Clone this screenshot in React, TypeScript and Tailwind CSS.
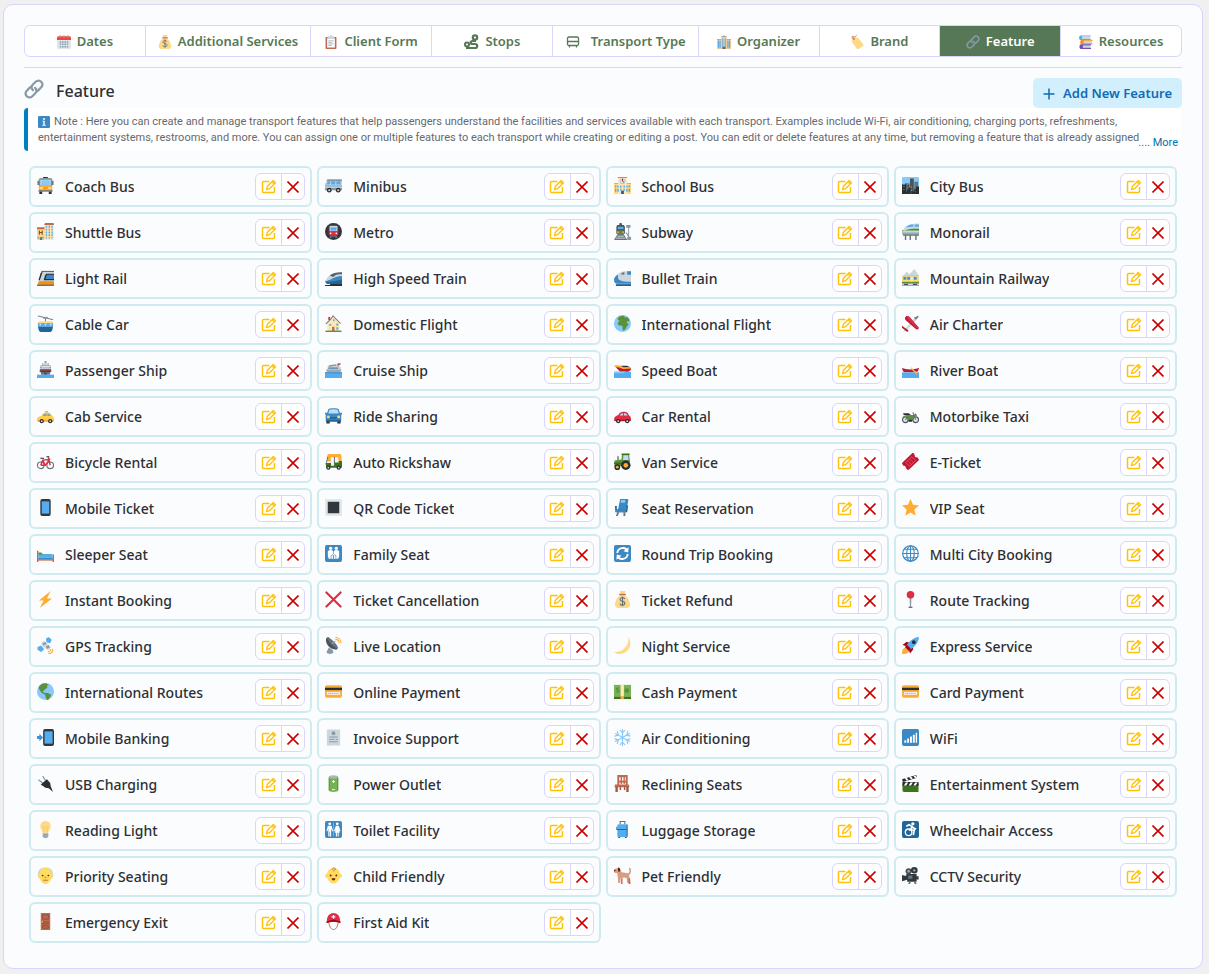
// src/pages/transport/FeatureSettings.tsx
import type { ReactNode } from "react";

const ICONS: Record<string, ReactNode> = {
  calendar: (
    <>
      <path fill="#E0E7EC" d="M36 32a4 4 0 0 1-4 4H4a4 4 0 0 1-4-4V9h36z" />
      <path fill="#F4433A" d="M0 13V7a4 4 0 0 1 4-4h28a4 4 0 0 1 4 4v6z" />
      <path stroke="#9AAAB4" strokeWidth="2.6" d="M8 0v8M18 0v8M28 0v8" />
      <path stroke="#8899A6" strokeWidth="4" strokeDasharray="4 2" d="M7 18h23M7 24h23M7 30h23" />
    </>
  ),
  moneybag: (
    <>
      <path fill="#FDD888" d="M31.9 21c-.5-5-5.4-9-9.4-12h-9c-4 3-9 7-9.400 12-.3 1-2.100 5-2.100 8 0 5 4 7 7 7h18c3 0 7-2 7-7 0-3-1.600-6-2.100-8zM12 0h12l-2 7h-8z" />
      <path fill="#BF6952" d="M11 6h14v3H11z" />
      <path fill="none" stroke="#67757F" strokeWidth="2.400" d="M23 17c-1-2-3-3-5-3-3 0-5 1.500-5 4s2 3.500 5 4 5 1.500 5 4-2 4-5 4-5-1-5.500-3M18 11.500v21" />
    </>
  ),
  clipboard: (
    <>
      <path fill="#C1694F" d="M32 34a2 2 0 0 1-2 2H6a2 2 0 0 1-2-2V7a2 2 0 0 1 2-2h24a2 2 0 0 1 2 2z" />
      <path fill="#fff" d="M8 9h20v23H8z" />
      <path fill="#CCD6DD" d="M25 3h-4a3 3 0 0 0-6 0h-4a2 2 0 0 0-2 2v5h18V5a2 2 0 0 0-2-2z" />
      <path stroke="#99AAB5" strokeWidth="2" d="M11 15h14M11 19h10M11 23h14M11 27h9" />
    </>
  ),
  hospital: (
    <>
      <path fill="#F3D2A2" d="M11 4h14v32H11z" />
      <path fill="#E6C79A" d="M0 12h12v24H0zM24 12h12v24H24z" />
      <path fill="#8899A6" d="M11 3h14v2H11zM0 10h11v2H0zM25 10h11v2H25zM17 0h2v4h-2z" />
      <path stroke="#55ACEE" strokeWidth="2.800" d="M4 15v18M8 15v18M28 15v18M32 15v18M15 9v22M21 9v22" />
      <path fill="#5C6B77" d="M14 30h8v6h-8z" />
    </>
  ),
  label: (
    <>
      <path fill="#FFD983" d="M5 7c1-2 3-3 5-2l11 3 13 16c1 1 1 3 0 4L22 36c-2 1-4 0-5-1L5 18z" />
      <circle cx="10" cy="10" r="3" fill="#D99E82" />
      <path fill="none" stroke="#C1694F" strokeWidth="2" d="M10 10C4 8 3 2 8 4c4 2 8 0 9-3" />
    </>
  ),
  link: (
    <g fill="none" stroke="#8899A6" strokeWidth="4" strokeLinecap="round">
      <path d="M16 20c-3-3-3-7 0-10l5-5c3-3 7-3 10 0s3 7 0 10l-5 5c-1 1-2 1.500-3 2" />
      <path d="M20 16c3 3 3 7 0 10l-5 5c-3 3-7 3-10 0s-3-7 0-10l5-5c1-1 2-1.500 3-2" />
    </g>
  ),
  books: (
    <>
      <path fill="#55ACEE" d="M4 1h26v3H9v6h21v3H4c-5 0-5-12 0-12z" />
      <path fill="#CCD6DD" d="M8 4h21v6H8zM11 15h22v7H11zM9 27h20v6H9z" />
      <path fill="#F4900C" d="M7 12h28v3H12v6h23v3H7c-5 0-5-12 0-12z" />
      <path fill="#744EAA" d="M5 24h26v3H10v6h21v3H5c-5 0-5-12 0-12z" />
    </>
  ),
  info: (
    <>
      <rect width="36" height="36" rx="4" fill="#3B88C3" />
      <circle cx="18" cy="9" r="3" fill="#fff" />
      <path fill="#fff" d="M14 14h6v12h3v3H13v-3h3v-9h-2z" />
    </>
  ),
  trolley: (
    <>
      <path fill="#292F33" d="M13 0h10v3H13zM5 30h6v6H5zM25 30h6v6h-6z" />
      <path fill="#8899A6" d="M6 2h24l2 3v14H4V5z" />
      <path fill="#66757F" d="M1 8h4v9H1zM31 8h4v9h-4z" />
      <path fill="#BBDDF5" d="M7 6h22v12H7z" />
      <path fill="#88C9F9" d="M9 7h18v10H9z" />
      <path fill="#FFAC33" d="M4 19h28v11H4z" />
      <path fill="#66757F" d="M3 28h30v3H3z" />
      <path fill="#FFF8E8" d="M7 22h5v3H7zM24 22h5v3h-5z" />
      <path fill="#F4900C" d="M14 22h8v3h-8z" />
    </>
  ),
  minibus: (
    <>
      <path fill="#8899A6" d="M0 17 5 5h28c2 0 3 1 3 3v20H0z" />
      <path fill="#BDDDF4" d="M0 18 3 9h33v9z" />
      <path fill="#55ACEE" d="M3 16 6 9h5v7zM13 9h9v7h-9zM24 9h9v7h-9z" />
      <path fill="#CCD6DD" d="M0 20h36v3H0z" />
      <circle cx="9" cy="28" r="5" fill="#292F33" />
      <circle cx="28" cy="28" r="5" fill="#292F33" />
      <circle cx="9" cy="28" r="2.300" fill="#CCD6DD" />
      <circle cx="28" cy="28" r="2.300" fill="#CCD6DD" />
    </>
  ),
  school: (
    <>
      <path fill="#FFE8B6" d="M9 2h18v34H9z" />
      <path fill="#FFD983" d="M0 15h9v21H0zM27 15h9v21h-9z" />
      <path fill="#EE7B5A" d="M8 0h20v2H8zM0 13h9v2H0zM27 13h9v2h-9z" />
      <circle cx="18" cy="9" r="5.500" fill="#E1E8ED" stroke="#8899A6" />
      <path fill="none" stroke="#A0041E" strokeWidth="1.800" d="M18 4v5l3 2" />
      <path fill="#55ACEE" d="M2 18h3v4H2zM7 18h3v4H7zM2 25h3v6H2zM7 25h3v6H7zM26 18h3v4h-3zM31 18h3v4h-3zM26 25h3v6h-3zM31 25h3v6h-3zM13 18h3v5h-3zM20 18h3v5h-3zM13 25h3v4h-3zM20 25h3v4h-3z" />
      <path fill="#226699" d="M15 29h6v7h-6z" />
    </>
  ),
  city: (
    <>
      <rect width="36" height="36" rx="3" fill="#88C9F9" />
      <path fill="#4B545D" d="M9 14h7v22H9zM17 3h8v33h-8z" />
      <path fill="#66757F" d="M26 10h8v26h-8z" />
      <path fill="#292F33" d="M0 16h7v-3h2v20l5-10h4v13H0zM30 20h6v16H20v-6h6v-6h4z" />
      <path stroke="#FFD983" strokeWidth="1.400" strokeDasharray="2 5" d="M4 19v14M12 15v14M20 20v12M28 24v8" />
    </>
  ),
  hotel: (
    <>
      <path fill="#FFD983" d="M0 12h17v24H0z" />
      <path fill="#FFE8B6" d="M16 4h19v32H16z" />
      <path fill="#C1694F" d="M17 0h18l1 4H15zM0 9h16v4H0z" />
      <path stroke="#55ACEE" strokeWidth="3" strokeDasharray="4 2" d="M20 6v27M26 6v27M32 6v27M3 29v4M13 29v4" />
      <path fill="none" stroke="#8A4B38" strokeWidth="2.400" d="M5 16v9M11 16v9M5 20h6" />
      <path fill="#66757F" d="M6 30h5v6H6z" />
    </>
  ),
  metro: (
    <>
      <circle cx="18" cy="18" r="18" fill="#31373D" />
      <path fill="#DD2E44" d="M8 8c0-3 20-3 20 0v17c0 3-20 3-20 0z" />
      <path fill="#CCD6DD" d="M10 6h16v3H10z" />
      <path fill="#BBDDF5" d="M10 9h16v8H10z" />
      <path fill="#55ACEE" d="M12 10h12v6H12z" />
      <circle cx="12" cy="22" r="1.700" fill="#fff" />
      <circle cx="24" cy="22" r="1.700" fill="#fff" />
      <path fill="#66757F" d="M12 27h12l3 5H9z" />
      <path fill="#31373D" d="M14 29h8v4h-8z" />
    </>
  ),
  station: (
    <>
      <path fill="#66757F" d="M8 23h12l8 13H0z" />
      <path stroke="#CCD6DD" strokeWidth="2" d="M7 28h14M4 32h20" />
      <path fill="#4B545D" d="M12 0h4l1 4h4l2 4v15H5V8l2-4h4z" />
      <path fill="#55ACEE" d="M8 8h12v5H8z" />
      <path fill="#5C913B" d="M7 16h14v6H7z" />
      <path fill="#FFAC33" d="M7 18h3v3H7zM18 18h3v3h-3z" />
      <path fill="#8899A6" d="M30 8h2v28h-2zM26 4h9v6h-9zM24 20h3l5 8v4zM28 29h8v7h-8z" />
    </>
  ),
  monorail: (
    <>
      <path fill="#CCD6DD" d="M0 18C6 5 16 1 36 1v20H0z" />
      <path fill="#55ACEE" d="M8 9C13 4 18 3 24 3v5zM27 3h9v5h-9z" />
      <path fill="#3E921D" d="M0 18c8-5 20-6 36-6v4H0z" />
      <path fill="#99AAB5" d="M0 20h36v4H0z" />
      <path fill="#66757F" d="M2 24h34v3H2zM6 27h3v9H6zM16 27h3v9h-3zM28 27h3v9h-3z" />
    </>
  ),
  lightrail: (
    <>
      <path fill="#CCD6DD" d="M8 10c2-4 4-5 8-5h20v25H3z" />
      <path fill="#4B545D" d="M9 4h27v2H9z" />
      <path fill="#292F33" d="M17 14c1-3 2-4 4-4h15v14H14z" />
      <path fill="#3B88C3" d="M20 14c1-2 2-2 3-2h13v9H18z" />
      <path fill="#F4900C" d="M4 26h32v8H1z" />
      <path fill="#66757F" d="M0 33h36v3H0z" />
      <path fill="#292F33" d="m8 8 4-2-6 18H3z" />
    </>
  ),
  highspeed: (
    <>
      <path fill="#CCD6DD" d="M0 26C7 13 15 7 36 7v21H0z" />
      <path fill="#55606A" d="M10 14c6-5 14-7 26-7v4c-11 0-15 1-18 6z" />
      <path fill="#3B88C3" d="M0 26c15-2 18-11 36-11v16H3z" />
      <path fill="#226699" d="M2 27c12 0 20-2 34-5v9H4z" />
      <path fill="#292F33" d="M12 31h24v4H9zM0 34h36v2H0z" />
    </>
  ),
  bullet: (
    <>
      <path fill="#CCD6DD" d="M0 22C4 12 14 5 22 5h14v26H8c-6 0-8-3-8-9z" />
      <path fill="#3B88C3" d="M0 22c1-4 4-8 8-10l1 9c4 4 12 6 27 6v4H8c-6 0-8-3-8-9zM28 5h8v7h-8z" />
      <path fill="#66757F" d="M14 11c3-3 5-4 8-4v5z" />
      <path fill="#226699" d="M4 32h32v4H4z" />
    </>
  ),
  mountain: (
    <>
      <path fill="#CCD6DD" d="M1 17 10 6l6 5 10-11 10 14v8H0z" />
      <path fill="#9AAAB4" d="M0 33h36v3H0z" />
      <path fill="#A6D388" d="M0 14h36v2H0z" />
      <path fill="#FFD983" d="M0 16h36v12H0z" />
      <path fill="#3B94D9" d="M3 17h6v6H3zM11 17h6v6h-6zM25 17h6v6h-6z" />
      <path fill="#FFE8B6" d="M19 17h4v11h-4z" />
      <path fill="#5C913B" d="M0 27h36v4H0z" />
      <path fill="#4B545D" d="M4 31h9v3H4zM23 31h9v3h-9z" />
    </>
  ),
  cablecar: (
    <>
      <path stroke="#66757F" strokeWidth="2" d="M2 2l32 8M18 6v9" />
      <path fill="#8899A6" d="M13 4h10v4H13z" />
      <path fill="#FFD983" d="M4 13h28l3 5H1z" />
      <path fill="#55ACEE" d="M2 17h32v8H2z" />
      <path fill="#BBDDF5" d="m4 18 3 6 3-6zM15 18l3 6 3-6zM26 18l3 6 3-6z" />
      <path fill="#226699" d="M2 25h32l-2 8c-1 2-2 3-4 3H8c-2 0-3-1-4-3z" />
    </>
  ),
  house: (
    <>
      <path fill="#FFE8B6" d="M5 16 18 4l13 12v18H5z" />
      <path fill="#DD2E44" d="M7 4h4v7H7z" />
      <path fill="none" stroke="#66757F" strokeWidth="2.200" d="M2 19 12 9l5-7 16 16" />
      <path fill="#55ACEE" d="M9 19h4v4H9zM24 18h4v5h-4zM17 9h3v4h-3zM24 26h4v5h-4z" />
      <path fill="#C1694F" d="M15 25h5v9h-5z" />
      <path fill="#5C913B" d="M1 33h34v3H1z" />
    </>
  ),
  africa: (
    <>
      <circle cx="18" cy="18" r="18" fill="#88C9F9" />
      <path fill="#5C913B" d="M8 7c4-5 11-6 14-5l1 4 5-2c4 3 5 8 4 11l-4-3-1 5 4 2c-2 4-5 5-6 10l-4 4c-4-1-2-8-4-11-4 2-10-1-9-5 1-3 3-3 4-5-3 0-4-1-4-5z" />
    </>
  ),
  plane: (
    <>
      <path fill="#CCD6DD" d="m3 36 4-7L25 8l5-2 1 4-20 21z" />
      <path fill="#66757F" d="m25 4 4 1 5-4 1 3-6 6z" />
      <path fill="#BE1931" d="M7 5c2-4 6-4 9-1l19 22c2 3-2 6-5 4L8 11C6 9 6 7 7 5zM0 23l14 10-3 3L0 27z" />
      <path fill="#DD2E44" d="M10 3c2-1 4 0 6 2l18 21c1 3-1 4-3 2L11 8z" />
    </>
  ),
  ship: (
    <>
      <path fill="#8899A6" d="M16 0h4v5h5v4h3l2 7H6l2-7h3V5h5z" />
      <path fill="#E1E8ED" d="M12 5h12v3H12zM9 10h18v4H9z" />
      <path fill="#66757F" d="M6 17h24l-3 12H9z" />
      <path fill="#A0041E" d="M5 20h26l-1 3H6z" />
      <path fill="#4B545D" d="M15 24h6v5h-6z" />
      <path fill="#55ACEE" d="M0 29h36v7H0z" />
    </>
  ),
  cruise: (
    <>
      <path fill="#CCD6DD" d="m6 11 20-3 8 6v5H4z" />
      <path fill="#8899A6" d="M8 9 24 7v3L8 12zM26 5h4v6h-4z" />
      <path fill="#DD2E44" d="M28 5h5v3h-5z" />
      <path fill="#226699" d="M7 14h21v2H7z" />
      <path fill="#99AAB5" d="M2 18h33l-3 7H5z" />
      <path fill="#55ACEE" d="M0 24h36v12H0z" />
      <path fill="#3B88C3" d="M0 24h36v2H0z" />
    </>
  ),
  speedboat: (
    <>
      <path fill="#FFAC33" d="M0 10c8-2 14 0 19 3l17 1v4l-9 4H13z" />
      <path fill="#BE1931" d="M4 13c9 0 12 3 17 4l15-1c-1 6-5 7-10 7H13z" />
      <path fill="#292F33" d="M14 10h13l8 3H20z" />
      <path fill="#55ACEE" d="M0 23h36v13H0z" />
      <path fill="#88C9F9" d="M0 22h25l-5 4H0z" />
    </>
  ),
  canoe: (
    <>
      <path fill="#BE1931" d="M0 15c9 4 25 4 36 0-1 6-3 9-7 9H7c-4 0-6-3-7-9z" />
      <path stroke="#FFCC4D" strokeWidth="2.600" d="m19 14 10 11" />
      <path fill="#55ACEE" d="M0 24h36v12H0z" />
      <path fill="#FFAC33" d="m26 22 4-1 3 6-3 2z" />
    </>
  ),
  taxi: (
    <>
      <path fill="#FFCC4D" d="M0 25c1-4 6-6 9-6 1-4 5-8 12-8 7 0 10 4 11 8 3 1 4 5 4 8l-3 4H3z" />
      <path fill="#F4900C" d="M17 9h6v2h-6zM0 28h36v2H0z" />
      <path fill="#55ACEE" d="M12 19c1-3 4-5 8-5v5zM22 14c4 0 6 2 7 5h-7z" />
      <circle cx="10" cy="30" r="4.500" fill="#292F33" />
      <circle cx="28" cy="30" r="4.500" fill="#292F33" />
      <circle cx="10" cy="30" r="2" fill="#CCD6DD" />
      <circle cx="28" cy="30" r="2" fill="#CCD6DD" />
    </>
  ),
  carfront: (
    <>
      <path fill="#292F33" d="M3 27h7v8H3zM26 27h7v8h-7z" />
      <path fill="#3B88C3" d="M7 5c2-3 20-3 22 0l3 9c3 2 3 5 2 15H2c-1-10-1-13 2-15zM0 12h4v4H0zM32 12h4v4h-4z" />
      <path fill="#BBDDF5" d="M9 6c3-2 15-2 18 0l2 8H7z" />
      <path fill="#226699" d="M11 21h14v4H11zM2 27h32v4H2z" />
      <circle cx="7" cy="21" r="3" fill="#FFD983" />
      <circle cx="29" cy="21" r="3" fill="#FFD983" />
    </>
  ),
  redcar: (
    <>
      <path fill="#DD2E44" d="M0 25c1-5 6-7 9-8 2-4 5-7 11-7 8 0 10 3 12 8 3 1 4 4 4 9l-3 3H3z" />
      <path fill="#BBDDF5" d="M12 18c1-3 4-5 7-5v5zM21 13c4 0 6 1 8 5h-8z" />
      <path fill="#A0041E" d="M0 27h36v2H0z" />
      <circle cx="9" cy="30" r="4.500" fill="#292F33" />
      <circle cx="28" cy="30" r="4.500" fill="#292F33" />
      <circle cx="9" cy="30" r="2" fill="#CCD6DD" />
      <circle cx="28" cy="30" r="2" fill="#CCD6DD" />
    </>
  ),
  motorbike: (
    <>
      <circle cx="7" cy="27" r="6" fill="#DDE4E8" stroke="#4B545D" strokeWidth="2.400" />
      <circle cx="29" cy="27" r="6" fill="#DDE4E8" stroke="#4B545D" strokeWidth="2.400" />
      <path fill="#292F33" d="M2 13h12l4 3-2 3-12-2zM13 25h10l-2 6h-7z" />
      <path fill="#5C913B" d="M9 17h16l4-4 3 5-7 3-3 6h-9zM0 19l10-1v4z" />
      <path stroke="#66757F" strokeWidth="2.200" d="m23 11 6 16M7 27l8-7" />
    </>
  ),
  bicycle: (
    <>
      <circle cx="8" cy="26" r="7" fill="none" stroke="#66757F" strokeWidth="2.400" />
      <circle cx="28" cy="26" r="7" fill="none" stroke="#66757F" strokeWidth="2.400" />
      <path fill="none" stroke="#DD2E44" strokeWidth="3" d="M8 26l4-11 14-1-8 12H8M12 15l6 11M24 9l4 17" />
      <path fill="none" stroke="#292F33" strokeWidth="2.400" d="M7 11h8M20 8h6" />
    </>
  ),
  rickshaw: (
    <>
      <path fill="#FFAC33" d="M6 2h24c4 0 5 2 5 6v10H4V9z" />
      <path fill="#3E721D" d="M1 21h11l2-4h22v14H3z" />
      <path fill="#F5F8FA" d="M12 9h7v18h-6zM21 9h7l1 11h-8z" />
      <path stroke="#66757F" strokeWidth="2" d="M6 8 3 21M20 8v18" />
      <circle cx="7" cy="31" r="4.500" fill="#292F33" />
      <circle cx="29" cy="31" r="4.500" fill="#292F33" />
      <circle cx="7" cy="31" r="1.800" fill="#CCD6DD" />
      <circle cx="29" cy="31" r="1.800" fill="#CCD6DD" />
    </>
  ),
  tractor: (
    <>
      <path fill="#5C913B" d="M17 2h15v3l2 14-12 9H1V16l15-2z" />
      <path fill="#BBDDF5" d="M20 5h10l1 10H19z" />
      <path fill="#3E721D" d="M0 20h17v4H0zM16 1h17v3H16z" />
      <path fill="#66757F" d="M7 7h3v8H7z" />
      <circle cx="25" cy="26" r="10" fill="#292F33" />
      <circle cx="25" cy="26" r="5" fill="#FFAC33" />
      <circle cx="7" cy="30" r="6" fill="#292F33" />
      <circle cx="7" cy="30" r="3" fill="#FFAC33" />
    </>
  ),
  ticket: (
    <>
      <path fill="#BE1931" d="M21 1c1-1 3-1 4 0l2 3c-1 3 2 6 5 5l3 3c1 1 1 3 0 4L15 35c-1 1-3 1-4 0l-3-3c1-3-2-6-5-5l-2-3c-1-1-1-3 0-4z" />
      <path fill="none" stroke="#E8596E" strokeWidth="1.800" d="m8 20 13-12 8 8-13 12zM14 18l6 6M18 14l6 6" />
    </>
  ),
  mobile: (
    <>
      <path fill="#31373D" d="M11 0h14a4 4 0 0 1 4 4v28a4 4 0 0 1-4 4H11a4 4 0 0 1-4-4V4a4 4 0 0 1 4-4z" />
      <path fill="#55ACEE" d="M10 5h16v26H10z" />
    </>
  ),
  square: (
    <>
      <rect width="36" height="36" rx="3" fill="#E1E8ED" />
      <path fill="#CCD6DD" d="M4 4h28v28H4z" />
      <path fill="#31373D" d="M6 6h24v24H6z" />
    </>
  ),
  seat: (
    <>
      <path fill="#3B88C3" d="M13 0h14c3 0 4 2 3 5l-4 20H8z" />
      <path fill="#88C9F9" d="M15 2h9l-1 6h-9z" />
      <path fill="#226699" d="M2 15h4v7h20v-8h4l-2 14H3z" />
      <path fill="#3B88C3" d="M4 22h21v6H4z" />
      <path fill="#66757F" d="M7 28h4l-3 8H4zM20 28h4v8h-4z" />
    </>
  ),
  star: <path fill="#FFAC33" d="m18 0 5.300 12.400L36 13.500l-9.800 8.800L29 35.500 18 28.600 7 35.500l2.800-13.200L0 13.500l12.700-1.100z" />,
  bed: (
    <>
      <path fill="#C1694F" d="M0 12h3v24H0zM33 20h3v16h-3z" />
      <path fill="#C1694F" d="M1 30h34v3H1z" />
      <path fill="#55ACEE" d="M3 19h30v8H3z" />
      <path fill="#3B88C3" d="M3 27h30v3H3z" />
      <path fill="#5C913B" d="M3 16h6l4 4H3z" />
    </>
  ),
  family: (
    <>
      <rect width="36" height="36" rx="4" fill="#3B88C3" />
      <g fill="#fff">
        <circle cx="12" cy="7" r="3.500" />
        <circle cx="24" cy="7" r="3.500" />
        <path d="M6 13c3-3 9-3 12 0 3-3 9-3 12 0v11l-2 5H8l-2-5z" />
      </g>
      <path fill="none" stroke="#3B88C3" strokeWidth="1.400" d="M18 12v7M13 29v-6c0-3 5-3 5 0v6-6c0-3 5-3 5 0v6" />
    </>
  ),
  refresh: (
    <>
      <rect width="36" height="36" rx="4" fill="#3B88C3" />
      <path fill="none" stroke="#fff" strokeWidth="4" d="M7 17C8 5 24 3 28 12M29 19c-1 12-17 14-21 5" />
      <path fill="#fff" d="m31 5-1 11-10-3zM5 31l1-11 10 3z" />
    </>
  ),
  globe: (
    <g fill="none" stroke="#3B88C3" strokeWidth="2.400">
      <circle cx="18" cy="18" r="16.500" />
      <ellipse cx="18" cy="18" rx="8" ry="16.500" />
      <path d="M18 1v34M1 18h34M4 9h28M4 27h28" />
    </g>
  ),
  bolt: <path fill="#FFAC33" d="M29 0 4 20h10L6 36l26-20H21z" />,
  cross: <path stroke="#DD2E44" strokeWidth="4.500" strokeLinecap="round" d="m3 3 30 30M33 3 3 33" />,
  pin: (
    <>
      <path fill="#8899A6" d="M16 14h4l-1 21h-2z" />
      <path fill="#66757F" d="M14 33h8v3h-8z" />
      <circle cx="18" cy="8" r="8" fill="#DD2E44" />
    </>
  ),
  satellite: (
    <>
      <path fill="#55ACEE" d="m19 3 6-3 6 6-3 7-8-2zM1 21l8-3 6 8-6 6-8-5z" />
      <path fill="#CCD6DD" d="m9 12 6-4 15 14-6 6-6-3-7-7z" />
      <path fill="#8899A6" d="m12 13 7-2 1 4-7 3zM19 20l6-3 2 5-6 3z" />
      <path fill="none" stroke="#FFAC33" strokeWidth="2.200" d="M23 31c4 1 7-2 6-6M24 35c6 1 11-4 9-10" />
    </>
  ),
  antenna: (
    <>
      <path fill="#8899A6" d="m8 22-5 11c3 4 12 4 15 0l-2-6z" />
      <path fill="#4B545D" d="M3 2C-1 12 8 26 24 27l3-3L7 0z" />
      <path fill="#66757F" d="M5 1c5-2 25 18 22 23C22 25 4 8 5 1z" />
      <path stroke="#99AAB5" strokeWidth="2.400" d="m14 14 8-5" />
      <path fill="none" stroke="#FFAC33" strokeWidth="2.200" d="M22 5c5 0 8 3 8 8M22 1c7 0 12 5 12 12" />
    </>
  ),
  moon: <path fill="#FFD983" d="M30 0c8 11 5 25-5 32-9 6-19 5-25-1 8 2 17-1 23-8 6-6 9-15 7-23z" />,
  rocket: (
    <>
      <path fill="#A0041E" d="m1 17 9-7 9 4-8 6zM17 35l7-9-3-9-7 8z" />
      <path fill="#FFAC33" d="M0 36c0-8 2-13 7-14l8 8c-1 4-7 6-15 6z" />
      <path fill="#55ACEE" d="M9 19C15 8 25 1 36 0c-1 11-8 21-19 27z" />
      <path fill="#A0041E" d="M6 21l5-4 8 8-4 5z" />
      <circle cx="25" cy="11" r="4" fill="#292F33" />
    </>
  ),
  americas: (
    <>
      <circle cx="18" cy="18" r="18" fill="#88C9F9" />
      <path fill="#5C913B" d="M4 8C8 2 14 0 20 1l5 4-4 1 1 4-5 3-3 4h-3l5 4h7l7 4-2 5-6 8-3-6-2-7-8-5-5-8z" />
    </>
  ),
  card: (
    <>
      <rect y="5" width="36" height="26" rx="4" fill="#FFAC33" />
      <path fill="#292F33" d="M0 10h36v5H0z" />
      <path fill="#F4F7F9" d="M4 19h28v6H4z" />
      <path stroke="#8899A6" strokeWidth="1.600" strokeDasharray="3 1" d="M6 22h23" />
    </>
  ),
  cash: (
    <>
      <path fill="#3E721D" d="M0 28h36v6H0z" />
      <path fill="#77B255" d="M0 4h36v25H0z" />
      <circle cx="27" cy="16" r="5" fill="#5C913B" />
      <path fill="#FFE8B6" d="M14 4h7v25h-7z" />
      <path fill="#FFAC33" d="M14 28h7v6h-7z" />
      <path fill="none" stroke="#3E721D" strokeWidth="1.600" d="M10 11c-5-2-7 4-2 4s3 6-3 4" />
    </>
  ),
  mobilein: (
    <>
      <rect x="13" width="23" height="36" rx="4" fill="#31373D" />
      <path fill="#55ACEE" d="M16 5h17v26H16z" />
      <path fill="#3B94D9" d="M0 15h5v-5l8 8-8 8v-5H0z" />
    </>
  ),
  receipt: (
    <>
      <path fill="#CCD6DD" d="M4 1l2 1 2-2 3 2 3-2 4 2 3-2 3 2 3-2 2 2 3-2v35l-3-1-3 2-3-2-3 2-3-2-3 2-3-2-3 2-4-1z" />
      <circle cx="18" cy="9" r="4" fill="#8899A6" />
      <path stroke="#8899A6" strokeWidth="2" d="M9 17h18M9 22h11M23 22h4M9 27h18" />
    </>
  ),
  snow: (
    <g fill="none" stroke="#88C9F9" strokeWidth="2.400" strokeLinecap="round">
      <path d="M18 1v34M3 9.500l30 17M3 26.500l30-17" />
      <path d="m13 3 5 5 5-5M13 33l5-5 5 5M2 15l7-2-2-8M34 21l-7 2 2 8M2 21l7 2-2 8M34 15l-7-2 2-8" />
    </g>
  ),
  signal: (
    <>
      <rect width="36" height="36" rx="4" fill="#3B88C3" />
      <path fill="#fff" d="M5 24h4v5H5zM11 20h4v9h-4zM17 16h4v13h-4zM23 12h4v17h-4zM29 8h3v21h-3z" />
    </>
  ),
  plug: (
    <>
      <path stroke="#8899A6" strokeWidth="2.600" d="m3 10 9 7M12 2l6 10" />
      <path fill="#292F33" d="m8 20 13-11 7 8 1 7 5 12-9-8-7-1z" />
    </>
  ),
  battery: (
    <>
      <path fill="#77B255" d="M8 4h20v29c0 4-20 4-20 0z" />
      <ellipse cx="18" cy="4" rx="10" ry="3.500" fill="#A7B6C0" />
      <path fill="#5C913B" d="M8 6h2v28l-2-2zM26 6h2v26l-2 2z" />
      <path stroke="#fff" strokeWidth="2" d="M15 14h6M18 11v6M15 31h6" />
    </>
  ),
  chair: (
    <>
      <path fill="#C1694F" d="M7 0h22v5H7zM7 2h4v20H7zM25 2h4v20h-4zM14 5h3v14h-3zM20 5h3v14h-3zM2 20h29l2 6H1z" />
      <path fill="#9F5841" d="M3 25h5v11H3zM26 25h5v11h-5zM12 25h3v7h-3zM21 25h3v7h-3z" />
      <path fill="#C1694F" d="M9 12h18v4H9z" />
    </>
  ),
  clapper: (
    <>
      <path fill="#3E721D" d="M1 18h34v18H5c-3 0-4-1-4-4z" />
      <path fill="#292F33" d="M1 15h34v8H1zM0 9 30 0l2 6L2 15z" />
      <path fill="#fff" d="m6 7 4-1 4 5-4 1zM15 4l4-1 4 5-4 1zM24 2l4-1 4 5-4 1zM8 16h5l-4 6H4zM18 16h5l-4 6h-5zM28 16h5l-4 6h-5z" />
    </>
  ),
  bulb: (
    <>
      <path fill="#FFD983" d="M29 11c0 6-5 9-5 14H12c0-5-5-8-5-14C7 5 12 0 18 0s11 5 11 11z" />
      <path fill="none" stroke="#FFCC4D" strokeWidth="2" d="M14 25V12l4 3 4-3v13" />
      <path fill="#99AAB5" d="M12 26h12v7l-3 3h-6l-3-3z" />
    </>
  ),
  restroom: (
    <>
      <rect width="36" height="36" rx="4" fill="#3B88C3" />
      <g fill="#fff">
        <circle cx="10" cy="6" r="3" />
        <circle cx="26" cy="6" r="3" />
        <path d="M6 10h8l3 11-2 1-2-6v17h-2.500V23h-1v10H7V16l-2 6-2-1zM23 10h6l4 11-2 1-2-6 2 9h-2v8h-2.200v-8h-1.500v8H23v-8h-2l2-9-2 6-2-1z" />
      </g>
      <path fill="#BBDDF5" d="M17.500 3h1v30h-1z" />
    </>
  ),
  luggage: (
    <>
      <path fill="none" stroke="#66757F" strokeWidth="2.400" d="M13 7V1h10v6" />
      <rect x="7" y="7" width="22" height="27" rx="3" fill="#55ACEE" />
      <path fill="#226699" d="M7 17h22v2H7zM9 34h4v2H9zM23 34h4v2h-4zM5 12h2v7H5z" />
      <path fill="#3B88C3" d="M26 8h3v25h-3z" />
    </>
  ),
  wheelchair: (
    <>
      <rect width="36" height="36" rx="4" fill="#226699" />
      <circle cx="23" cy="6" r="3.500" fill="#fff" />
      <circle cx="14" cy="24" r="7" fill="none" stroke="#fff" strokeWidth="2.800" />
      <path fill="none" stroke="#fff" strokeWidth="3.400" d="m9 11 6-3 7 4-5 7h9l-2 11M22 14l8 3" />
    </>
  ),
  elder: (
    <>
      <path fill="#CCD6DD" d="M2 17C1 6 8 1 18 1s17 5 16 16l-3 8H5z" />
      <path fill="#FFDC5D" d="M5 15c0-8 6-13 13-13s13 5 13 13c0 12-5 21-13 21S5 27 5 15zM1 17h5v6c-3 0-5-2-5-6zM30 17h5c0 4-2 6-5 6z" />
      <circle cx="12" cy="18" r="1.800" fill="#662113" />
      <circle cx="24" cy="18" r="1.800" fill="#662113" />
      <path fill="none" stroke="#C1694F" strokeWidth="2" d="M13 28h10M16 22h4" />
    </>
  ),
  baby: (
    <>
      <path fill="#FFDC5D" d="M18 2c8 0 13 6 14 13 3 0 4 2 4 4s-2 4-5 4c-2 7-7 12-13 12S7 30 5 23c-3 0-5-2-5-4s1-4 4-4C5 8 10 2 18 2z" />
      <path fill="none" stroke="#C1694F" strokeWidth="2" d="M16 6c-2-4 6-6 6-1-1 3-4 2-5 4" />
      <circle cx="12" cy="18" r="2" fill="#662113" />
      <circle cx="24" cy="18" r="2" fill="#662113" />
      <path fill="#662113" d="M14 24h8c0 6-8 6-8 0z" />
    </>
  ),
  dog: (
    <>
      <path fill="#D99E82" d="M3 3h9l4 8 14 2c2-1 4-4 2-8-2-3 2-5 3-2 3 6 0 12-3 14l1 8-1 9h-4l-1-10-5-2-8 2-1 10H9L8 21 7 13l-6-1-1-5z" />
      <path fill="#662113" d="M8 1c4 0 6 2 5 8l-4 1zM0 6h3v3H0z" />
      <path fill="#C1694F" d="M15 24h3v12h-3zM31 24h3l1 12h-4z" />
    </>
  ),
  camera: (
    <>
      <circle cx="14" cy="9" r="6.500" fill="#4B545D" />
      <circle cx="26" cy="7" r="7" fill="#31373D" />
      <circle cx="14" cy="9" r="2.500" fill="#99AAB5" />
      <circle cx="26" cy="7" r="2.500" fill="#99AAB5" />
      <path fill="#31373D" d="M9 15h22v5l4-1v8l-4-1v5H11v-4l-11 3V17l9 2z" />
      <path fill="#66757F" d="M13 18h9v7h-9zM15 31h4l-2 5h-4zM25 31h4l2 5h-4z" />
    </>
  ),
  door: (
    <>
      <path fill="#C1694F" d="M8 0h20v36H8z" />
      <path fill="none" stroke="#8A4B38" strokeWidth="1.800" d="M12 4h12v9H12zM12 19h12v4H12zM12 27h12v5H12z" />
      <circle cx="11" cy="19" r="1.600" fill="#FFCC4D" />
    </>
  ),
  helmet: (
    <>
      <path fill="none" stroke="#C1694F" strokeWidth="2" d="M8 20c2 12 6 15 10 15s8-3 10-15" />
      <path fill="#DD2E44" d="M4 20C3 8 9 0 18 0s15 8 14 20l-7-1H11z" />
      <path fill="#A0041E" d="M3 18l15-4 15 4v3l-15-3-15 3z" />
      <path stroke="#fff" strokeWidth="2.600" d="M14 8h8M18 4v8" />
    </>
  ),
};

const TABS = [
  { label: "Dates", icon: "calendar" },
  { label: "Additional Services", icon: "moneybag" },
  { label: "Client Form", icon: "clipboard" },
  { label: "Stops", icon: "route" },
  { label: "Transport Type", icon: "bus" },
  { label: "Organizer", icon: "hospital" },
  { label: "Brand", icon: "label" },
  { label: "Feature", icon: "link" },
  { label: "Resources", icon: "books" },
];

const FEATURES = [
  ["trolley", "Coach Bus"],
  ["minibus", "Minibus"],
  ["school", "School Bus"],
  ["city", "City Bus"],
  ["hotel", "Shuttle Bus"],
  ["metro", "Metro"],
  ["station", "Subway"],
  ["monorail", "Monorail"],
  ["lightrail", "Light Rail"],
  ["highspeed", "High Speed Train"],
  ["bullet", "Bullet Train"],
  ["mountain", "Mountain Railway"],
  ["cablecar", "Cable Car"],
  ["house", "Domestic Flight"],
  ["africa", "International Flight"],
  ["plane", "Air Charter"],
  ["ship", "Passenger Ship"],
  ["cruise", "Cruise Ship"],
  ["speedboat", "Speed Boat"],
  ["canoe", "River Boat"],
  ["taxi", "Cab Service"],
  ["carfront", "Ride Sharing"],
  ["redcar", "Car Rental"],
  ["motorbike", "Motorbike Taxi"],
  ["bicycle", "Bicycle Rental"],
  ["rickshaw", "Auto Rickshaw"],
  ["tractor", "Van Service"],
  ["ticket", "E-Ticket"],
  ["mobile", "Mobile Ticket"],
  ["square", "QR Code Ticket"],
  ["seat", "Seat Reservation"],
  ["star", "VIP Seat"],
  ["bed", "Sleeper Seat"],
  ["family", "Family Seat"],
  ["refresh", "Round Trip Booking"],
  ["globe", "Multi City Booking"],
  ["bolt", "Instant Booking"],
  ["cross", "Ticket Cancellation"],
  ["moneybag", "Ticket Refund"],
  ["pin", "Route Tracking"],
  ["satellite", "GPS Tracking"],
  ["antenna", "Live Location"],
  ["moon", "Night Service"],
  ["rocket", "Express Service"],
  ["americas", "International Routes"],
  ["card", "Online Payment"],
  ["cash", "Cash Payment"],
  ["card", "Card Payment"],
  ["mobilein", "Mobile Banking"],
  ["receipt", "Invoice Support"],
  ["snow", "Air Conditioning"],
  ["signal", "WiFi"],
  ["plug", "USB Charging"],
  ["battery", "Power Outlet"],
  ["chair", "Reclining Seats"],
  ["clapper", "Entertainment System"],
  ["bulb", "Reading Light"],
  ["restroom", "Toilet Facility"],
  ["luggage", "Luggage Storage"],
  ["wheelchair", "Wheelchair Access"],
  ["elder", "Priority Seating"],
  ["baby", "Child Friendly"],
  ["dog", "Pet Friendly"],
  ["camera", "CCTV Security"],
  ["door", "Emergency Exit"],
  ["helmet", "First Aid Kit"],
];

function Emoji({ name, className }: { name: string; className: string }) {
  return (
    <svg viewBox="0 0 36 36" className={`shrink-0 ${className}`} aria-hidden="true">
      {ICONS[name]}
    </svg>
  );
}

function TabIcon({ name }: { name: string }) {
  if (name === "route") {
    return (
      <svg viewBox="0 0 16 16" className="size-4 shrink-0" fill="none" stroke="currentColor" aria-hidden="true">
        <path strokeWidth="2.200" d="M12 7H9.500C7 7 7 10 9.500 10H12c3 0 3 4 0 4H5" />
        <circle cx="12" cy="3.500" r="2.200" strokeWidth="2.200" />
        <circle cx="4" cy="10.500" r="2" strokeWidth="2" />
        <path strokeWidth="2" d="M4 12v3M12 5v3" />
      </svg>
    );
  }
  if (name === "bus") {
    return (
      <svg viewBox="0 0 16 16" className="mr-1 size-4 shrink-0" fill="none" stroke="currentColor" aria-hidden="true">
        <rect x="2.500" y="3" width="11" height="8.500" rx="1.500" strokeWidth="1.300" />
        <path strokeWidth="1.300" d="M2.500 7.500h11M4.500 11.500v2M11.500 11.500v2" />
      </svg>
    );
  }
  return <Emoji name={name} className="size-[14px]" />;
}

function FeatureCard({ icon, name }: { icon: string; name: string }) {
  return (
    <li className="flex items-center justify-between rounded-md border-2 border-[#d0ebf0] px-[5px] py-[5px]">
      <div className="flex min-w-0 items-center gap-[11px] pl-px">
        <Emoji name={icon} className="mb-0.5 size-[17px]" />
        <span className="truncate text-[14px] leading-5 font-medium text-[#2c3034]">{name}</span>
      </div>
      <div className="flex h-[27px] shrink-0 divide-x divide-[#d9d5fb] overflow-hidden rounded-md border border-[#d9d5fb] bg-white">
        <button type="button" aria-label={`Edit ${name}`} className="flex w-[26px] items-center justify-center">
          <svg viewBox="0 0 16 16" className="size-4" fill="none" stroke="#ffc107" aria-hidden="true">
            <path strokeWidth="1.500" d="M8.500 2.500h-6a1 1 0 0 0-1 1v9a1 1 0 0 0 1 1h10a1 1 0 0 0 1-1V8" />
            <path strokeWidth="1.300" strokeLinejoin="round" d="m5.500 10.700.8-3.200L12.300 1.500l2.200 2.200-6 6zM11 2.800 13.200 5" />
          </svg>
        </button>
        <button type="button" aria-label={`Delete ${name}`} className="flex w-[22px] items-center justify-center">
          <svg viewBox="0 0 12 12" className="size-3" fill="none" stroke="#cc0000" strokeWidth="1.600" aria-hidden="true">
            <path d="m.5.5 11 11M11.500.5l-11 11" />
          </svg>
        </button>
      </div>
    </li>
  );
}

export default function App() {
  return (
    <div className="min-h-screen bg-[#f0f0f1] px-[3px] pt-1 pr-1.5 pb-1 font-['Noto_Sans',sans-serif]">
      <main className="rounded-[10px] border border-[#d9d5fb] bg-[#fbfcfe] p-5">
        {/* Tabs */}
        <nav className="flex overflow-hidden rounded-md border border-[#d9d5fb] bg-white">
          {TABS.map((tab) => (
            <button
              key={tab.label}
              type="button"
              className={`flex h-[30px] flex-1 items-center justify-center gap-1.5 border-r border-[#d9d5fb] px-3 pt-0.5 text-[13px] font-semibold whitespace-nowrap last:border-r-0 ${
                tab.label === "Feature" ? "bg-[#567856] text-white" : "text-[#567856]"
              }`}
            >
              <TabIcon name={tab.icon} />
              {tab.label}
            </button>
          ))}
        </nav>

        {/* Section Header */}
        <div className="mt-2.5 flex items-start justify-between border-t border-[#d9d5fb] pt-2.5">
          <h2 className="flex items-center gap-3 text-[16px] leading-[26px] font-medium text-[#2c3034]">
            <Emoji name="link" className="mb-1 size-5" />
            Feature
          </h2>
          <button
            type="button"
            className="flex h-[30px] items-center gap-2 rounded-[5px] bg-[#d2effd] px-2.5 pt-0.5 text-[13px] font-semibold text-[#116bb5]"
          >
            <svg viewBox="0 0 12 12" className="size-3" stroke="currentColor" strokeWidth="1.500" aria-hidden="true">
              <path d="M6 .5v11M.5 6h11" />
            </svg>
            Add New Feature
          </button>
        </div>

        {/* Note */}
        <div className="relative rounded-[4px] border-l-4 border-[#0081bd] bg-white pt-1.5 pr-10 pb-[5px] pl-2.5 font-[Roboto,'Noto_Sans',sans-serif] text-[11px] leading-4">
          <p className="text-[#646970]">
            <Emoji name="info" className="mr-1 inline size-3" />
            Note : Here you can create and manage transport features that help passengers understand the facilities and
            services available with each transport. Examples include Wi-Fi, air conditioning, charging ports,
            refreshments, entertainment systems, restrooms, and more. You can assign one or multiple features to each
            transport while creating or editing a post. You can edit or delete features at any time, but removing a
            feature that is already assigned
          </p>
          <a href="#more" className="absolute right-1 bottom-0 text-[#0073aa]">
            .... More
          </a>
        </div>

        {/* Feature Grid */}
        <ul className="mt-[15px] grid grid-cols-4 gap-[5px] px-[5px] pb-[5px]">
          {FEATURES.map(([icon, name]) => (
            <FeatureCard key={name} icon={icon} name={name} />
          ))}
        </ul>
      </main>
    </div>
  );
}
